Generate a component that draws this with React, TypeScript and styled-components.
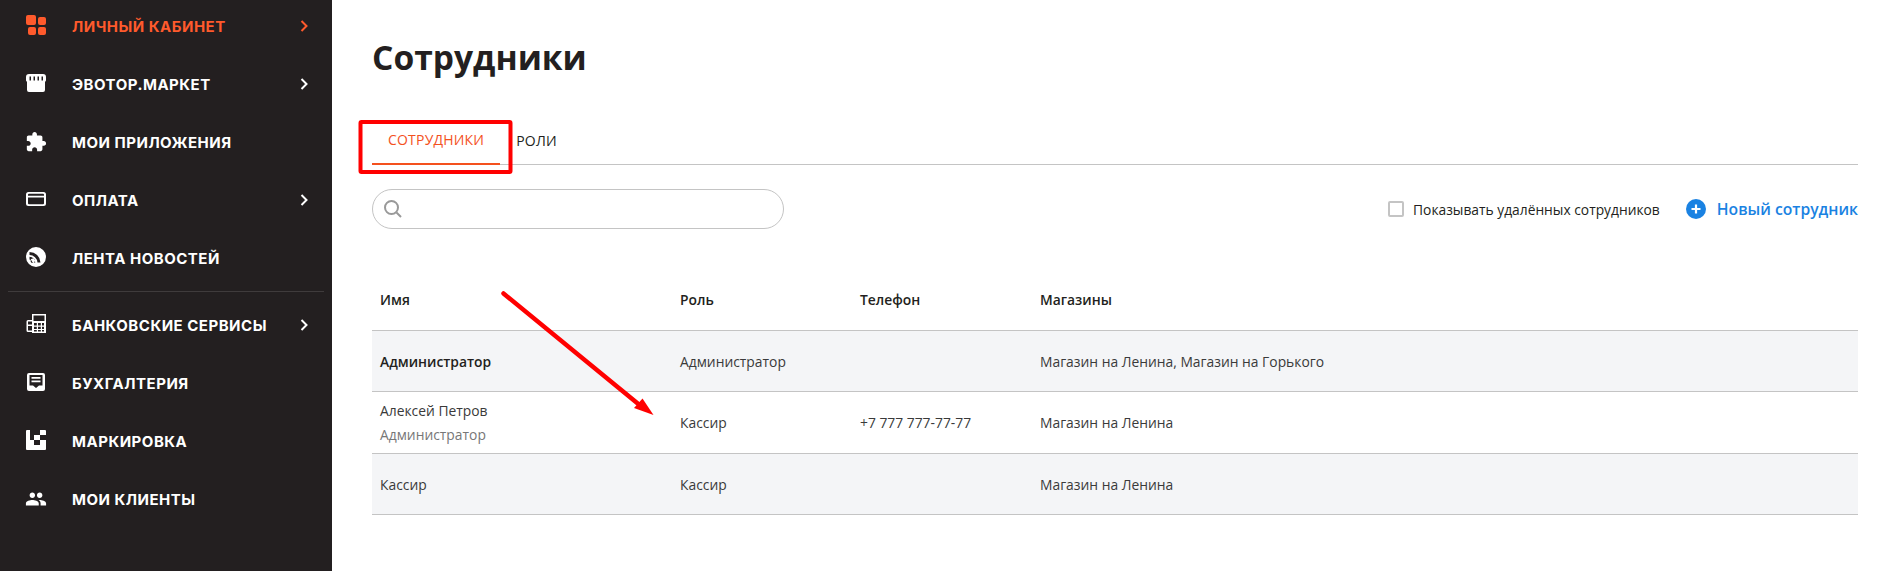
import React from "react";
import styled, { createGlobalStyle } from "styled-components";

const Global = createGlobalStyle`
  html, body { margin: 0; padding: 0; background: #fff; }
  body { font-family: "Open Sans", "Liberation Sans", sans-serif; color: #231f20; }
`;

const Page = styled.div`
  position: relative;
  display: flex;
  width: 1884px;
  height: 571px;
  overflow: hidden;
`;

const Sidebar = styled.nav`
  flex: none;
  width: 332px;
  height: 571px;
  background: #231f20;
  box-sizing: border-box;
`;

const NavGroup = styled.div`
  display: flex;
  flex-direction: column;
  &:first-child { margin-top: -3px; }
`;

const Divider = styled.div`
  height: 1px;
  margin: 4px 8px 4px;
  background: #3f3b3c;
`;

const NavItem = styled.a<{ $active?: boolean }>`
  display: flex;
  align-items: center;
  height: 58px;
  padding-left: 25px;
  color: ${(p) => (p.$active ? "#ff5a2c" : "#fff")};
  font-family: "Inter", "Open Sans", sans-serif;
  font-weight: 700;
  font-size: 15px;
  letter-spacing: 0.5px;
  text-transform: uppercase;
`;

const NavIcon = styled.svg`
  flex: none;
  width: 22px;
  height: 22px;
  margin-right: 25px;
  fill: currentColor;
`;

const NavLabel = styled.span`
  flex: 1;
  white-space: nowrap;
`;

const Chevron = styled.svg`
  flex: none;
  width: 8px;
  height: 12px;
  margin-right: 24px;
  fill: none;
  stroke: currentColor;
  stroke-width: 2;
`;

const Main = styled.main`
  flex: 1;
  min-width: 0;
  padding: 0 26px 0 40px;
`;

const Title = styled.h1`
  margin: 32px 0 0;
  font-size: 33.6px;
  line-height: 50px;
  font-weight: 700;
  color: #231f20;
`;

const Tabs = styled.div`
  display: flex;
  margin-top: 33px;
  border-bottom: 1px solid #c4c4c4;
  height: 49px;
`;

const Tab = styled.div<{ $active?: boolean }>`
  display: flex;
  align-items: center;
  height: 50px;
  box-sizing: border-box;
  padding: 0 ${(p) => (p.$active ? "16px" : "0")};
  margin-right: 16px;
  font-size: 14px;
  letter-spacing: 0.2px;
  font-weight: 500;
  color: ${(p) => (p.$active ? "#f4511e" : "#231f20")};
  border-bottom: ${(p) => (p.$active ? "2px solid #f4511e" : "0")};
`;

const Toolbar = styled.div`
  display: flex;
  align-items: center;
  justify-content: space-between;
  margin-top: 24px;
  height: 40px;
`;

const SearchBox = styled.div`
  display: flex;
  align-items: center;
  width: 412px;
  height: 40px;
  box-sizing: border-box;
  padding-left: 10px;
  border: 1px solid #c4c4c4;
  border-radius: 20px;
  color: #999;
`;

const ToolbarRight = styled.div`
  display: flex;
  align-items: center;
`;

const CheckBox = styled.span`
  width: 16px;
  height: 16px;
  box-sizing: border-box;
  border: 2px solid #c4c4c4;
  border-radius: 2px;
  margin-right: 9px;
`;

const CheckLabel = styled.span`
  font-size: 13.8px;
  color: #231f20;
  margin-right: 26px;
`;

const NewButton = styled.a`
  display: flex;
  align-items: center;
  gap: 11px;
  font-size: 15.7px;
  font-weight: 600;
  color: #1a82e2;
`;

const Table = styled.div`
  margin-top: 42px;
`;

const Row = styled.div<{ $shade?: boolean; $height: number }>`
  display: grid;
  grid-template-columns: 300px 180px 180px 1fr;
  align-items: center;
  height: ${(p) => p.$height}px;
  padding-left: 8px;
  box-sizing: border-box;
  border-bottom: 1px solid #c4c4c4;
  background: ${(p) => (p.$shade ? "#f4f5f7" : "#fff")};
  font-size: 13.85px;
  color: #3a3a3a;
`;

const HeadCell = styled.div`
  padding-bottom: 2px;
  font-weight: 600;
  color: #231f20;
`;

const NameCell = styled.div<{ $bold?: boolean }>`
  font-weight: ${(p) => (p.$bold ? 600 : 400)};
  color: ${(p) => (p.$bold ? "#231f20" : "#3a3a3a")};
`;

const SubName = styled.div`
  margin-top: 5px;
  color: #777;
`;

const Overlay = styled.svg`
  position: absolute;
  left: 0;
  top: 0;
  width: 1884px;
  height: 571px;
  pointer-events: none;
`;

const I: Record<string, { vb: string; body: React.ReactNode }> = {
  grid: {
    vb: "0 0 22 22",
    body: (
      <>
        <rect x="1" y="0" width="10" height="10" rx="2" />
        <rect x="13" y="2" width="8" height="8" rx="2" />
        <rect x="3" y="12" width="8" height="8" rx="2" />
        <rect x="13" y="12" width="8" height="8" rx="2" />
      </>
    ),
  },
  market: {
    vb: "0 0 22 22",
    body: (
      <path
        fillRule="evenodd"
        d="M4 1h14a3 3 0 0 1 3 3v3.500l-1 1.500v8a2 2 0 0 1-2 2H4a2 2 0 0 1-2-2V9L1 7.500V4a3 3 0 0 1 3-3zM4.500 3.500V7.500H6V3.500zM8.500 3.500V7.500H10V3.500zM12.500 3.500V7.500H14V3.500zM16.500 3.500V7.500H18V3.500z"
      />
    ),
  },
  puzzle: {
    vb: "0 0 24 24",
    body: (
      <path d="M20.500 11H19V7c0-1.100-.9-2-2-2h-4V3.500C13 2.120 11.880 1 10.500 1S8 2.120 8 3.500V5H4c-1.100 0-1.990.9-1.990 2v3.800H3.500c1.490 0 2.700 1.210 2.700 2.700s-1.210 2.700-2.700 2.700H2V20c0 1.100.9 2 2 2h3.800v-1.500c0-1.490 1.210-2.700 2.700-2.700 1.490 0 2.700 1.210 2.700 2.700V22H17c1.100 0 2-.9 2-2v-4h1.500c1.380 0 2.500-1.120 2.500-2.500S21.880 11 20.500 11z" />
    ),
  },
  card: {
    vb: "0 0 22 22",
    body: (
      <path
        fillRule="evenodd"
        d="M3.500 3h15A2.500 2.500 0 0 1 21 5.500v9a2.500 2.500 0 0 1-2.500 2.500h-15A2.500 2.500 0 0 1 1 14.500v-9A2.500 2.500 0 0 1 3.500 3zM3 5.800v.9h16v-.9a1 1 0 0 0-1-1H4a1 1 0 0 0-1 1zM3 8.500v5.700a1 1 0 0 0 1 1h14a1 1 0 0 0 1-1V8.500z"
      />
    ),
  },
  news: {
    vb: "0 0 22 22",
    body: (
      <path
        fillRule="evenodd"
        d="M11 0a10 10 0 1 1 0 20 10 10 0 0 1 0-20zM4.500 5v3a8 8 0 0 1 8 7.500h3A11 11 0 0 0 4.500 5zM4.500 9.800v2.800a3.500 3.500 0 0 1 3 3h-0a6 6 0 0 0 2.800 0A6.500 6.500 0 0 0 4.500 9.800zM7.700 11.500a2.200 2.200 0 1 0 0 4.400 2.200 2.200 0 0 0 0-4.400z"
      />
    ),
  },
  bank: {
    vb: "0 0 22 22",
    body: (
      <path
        fillRule="evenodd"
        d="M7 0h14v19H7v-1H3a1.500 1.500 0 0 1-1.500-1.500v-9A1.500 1.500 0 0 1 3 6h4zM8.500 1.500V7h11V1.500zM3 7.500v3h4v-3zM3 12v4.500h4V12zM9 9v2.500h2.800V9zM13 9v2.500h2.800V9zM17 9v2.500h2V9zM9 12.700v2.300h2.800v-2.300zM13 12.700v2.300h2.800v-2.300zM17 12.700v2.300h2v-2.300zM9 16v1.500h2.800V16zM13 16v1.500h2.800V16zM17 16v1.500h2V16z"
      />
    ),
  },
  accounting: {
    vb: "0 0 22 22",
    body: (
      <path
        fillRule="evenodd"
        d="M4 1h14a2 2 0 0 1 2 2v14a2 2 0 0 1-2 2H4a2 2 0 0 1-2-2V3a2 2 0 0 1 2-2zM4.500 3v10.500H8l3 2.500 3-2.500h3.500V3zM6.500 5h9v1.800h-9zM6.500 8.500h9v1.800h-9z"
      />
    ),
  },
  marking: {
    vb: "0 0 22 22",
    body: (
      <path
        fillRule="evenodd"
        d="M2 0h18a1 1 0 0 1 1 1v18a1 1 0 0 1-1 1H2a1 1 0 0 1-1-1V1a1 1 0 0 1 1-1zM5 0h10v5H5zM5 5h4v5H5zM15 5h6v5h-6zM9 10h6v5H9z"
      />
    ),
  },
  people: {
    vb: "0 0 24 24",
    body: (
      <path d="M16 11c1.660 0 2.990-1.340 2.990-3S17.660 5 16 5c-1.660 0-3 1.340-3 3s1.340 3 3 3zm-8 0c1.660 0 2.990-1.340 2.990-3S9.660 5 8 5C6.340 5 5 6.340 5 8s1.340 3 3 3zm0 2c-2.330 0-7 1.170-7 3.500V19h14v-2.500c0-2.330-4.670-3.500-7-3.500zm8 0c-.29 0-.62.02-.97.05 1.160.84 1.970 1.970 1.970 3.450V19h6v-2.500c0-2.330-4.670-3.500-7-3.500z" />
    ),
  },
};

type NavDef = { icon: string; label: string; arrow?: boolean; active?: boolean };

const top: NavDef[] = [
  { icon: "grid", label: "Личный кабинет", arrow: true, active: true },
  { icon: "market", label: "Эвотор.Маркет", arrow: true },
  { icon: "puzzle", label: "Мои приложения" },
  { icon: "card", label: "Оплата", arrow: true },
  { icon: "news", label: "Лента новостей" },
];
const bottom: NavDef[] = [
  { icon: "bank", label: "Банковские сервисы", arrow: true },
  { icon: "accounting", label: "Бухгалтерия" },
  { icon: "marking", label: "Маркировка" },
  { icon: "people", label: "Мои клиенты" },
];

const Nav = ({ items }: { items: NavDef[] }) => (
  <NavGroup>
    {items.map((n) => (
      <NavItem key={n.label} $active={n.active}>
        <NavIcon viewBox={I[n.icon].vb}>{I[n.icon].body}</NavIcon>
        <NavLabel>{n.label}</NavLabel>
        {n.arrow && (
          <Chevron viewBox="0 0 8 12">
            <path d="M1.500 1l5 5-5 5" />
          </Chevron>
        )}
      </NavItem>
    ))}
  </NavGroup>
);

export default function App() {
  return (
    <Page>
      <Global />
      <Sidebar>
        <Nav items={top} />
        <Divider />
        <Nav items={bottom} />
      </Sidebar>
      <Main>
        <Title>Сотрудники</Title>
        <Tabs>
          <Tab $active>СОТРУДНИКИ</Tab>
          <Tab>РОЛИ</Tab>
        </Tabs>
        <Toolbar>
          <SearchBox>
            <svg width="20" height="20" viewBox="0 0 20 20" fill="none" stroke="currentColor" strokeWidth="2">
              <circle cx="8.500" cy="8.500" r="6.500" />
              <path d="M13.500 13.500l4.500 4.500" />
            </svg>
          </SearchBox>
          <ToolbarRight>
            <CheckBox />
            <CheckLabel>Показывать удалённых сотрудников</CheckLabel>
            <NewButton>
              <svg width="20" height="20" viewBox="0 0 20 20">
                <circle cx="10" cy="10" r="10" fill="currentColor" />
                <path d="M10 5.500v9M5.500 10h9" stroke="#fff" strokeWidth="2.200" />
              </svg>
              Новый сотрудник
            </NewButton>
          </ToolbarRight>
        </Toolbar>
        <Table>
          <Row $height={60}>
            <HeadCell>Имя</HeadCell>
            <HeadCell>Роль</HeadCell>
            <HeadCell>Телефон</HeadCell>
            <HeadCell>Магазины</HeadCell>
          </Row>
          <Row $shade $height={61}>
            <NameCell $bold>Администратор</NameCell>
            <div>Администратор</div>
            <div />
            <div>Магазин на Ленина, Магазин на Горького</div>
          </Row>
          <Row $height={62}>
            <NameCell>
              Алексей Петров
              <SubName>Администратор</SubName>
            </NameCell>
            <div>Кассир</div>
            <div>+7 777 777-77-77</div>
            <div>Магазин на Ленина</div>
          </Row>
          <Row $shade $height={61}>
            <NameCell>Кассир</NameCell>
            <div>Кассир</div>
            <div />
            <div>Магазин на Ленина</div>
          </Row>
        </Table>
      </Main>
      <Overlay viewBox="0 0 1884 571">
        <rect x="360.500" y="122" width="150" height="50" fill="none" stroke="#ff0000" strokeWidth="4" rx="1" />
        <path d="M503.500 293.500L642 407" stroke="#ff0000" strokeWidth="4.500" strokeLinecap="round" />
        <path d="M653.500 415L634 408L642.500 398.500z" fill="#ff0000" />
      </Overlay>
    </Page>
  );
}
